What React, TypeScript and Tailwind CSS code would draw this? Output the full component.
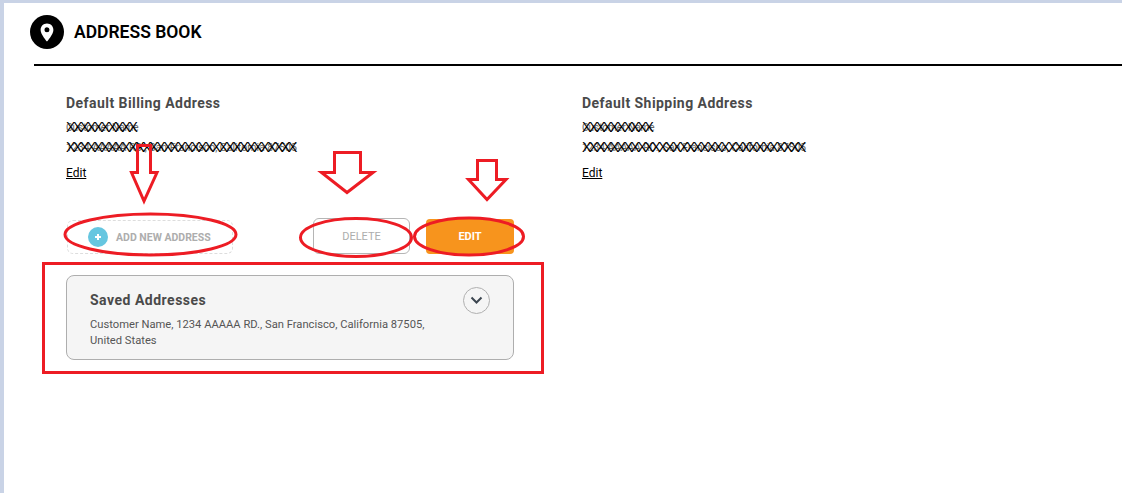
import React from 'react';

const font = { fontFamily: 'Roboto, sans-serif' };

const MaskedLine: React.FC<{ real: string; xs: string; realSize: string }> = ({ real, xs, realSize }) => (
  <div className="relative h-5">
    <span className={`absolute left-0 top-[3px] whitespace-nowrap leading-4 text-[#666] ${realSize}`}>{real}</span>
    <span className="absolute left-0 top-0 whitespace-nowrap font-['Liberation_Sans'] text-[14px] leading-5 tracking-[-2.400px] text-black">
      {xs}
    </span>
  </div>
);

const AddressColumn: React.FC<{ title: string; x2: string; size2: string }> = ({ title, x2, size2 }) => (
  <div>
    <h3 className="text-[14px] font-bold leading-5 tracking-[0.45px] text-[#4a4a4a]">{title}</h3>
    <div className="mt-[4px]">
      <MaskedLine real="Customer Name" xs="XXXXXXXXXX" realSize="text-[10px]" />
      <MaskedLine real="1234 AAAAA RD., San Francisco, California 87505" xs={x2} realSize={size2} />
    </div>
    <a className="mt-[9px] block w-fit text-[12px] leading-[14px] text-black underline">Edit</a>
  </div>
);

const Annotations: React.FC = () => (
  <svg className="pointer-events-none absolute left-0 top-0" width="1122" height="493" fill="none" stroke="#ed1c24">
    <path strokeWidth="3" d="M137.500 145.500H150.500V172.500H157L144 201L131.500 172.500H137.500Z" />
    <path strokeWidth="3" d="M334.500 152.500H360.500V172.500H373L347 192.500L321.500 172.500H334.500Z" />
    <path strokeWidth="3" d="M477.500 160.500H496.500V179.500H506L487 199.500L468.500 179.500H477.500Z" />
    <ellipse cx="150.500" cy="234.500" rx="85.500" ry="20.500" strokeWidth="3" />
    <ellipse cx="356" cy="237.500" rx="55.500" ry="19" strokeWidth="3" />
    <ellipse cx="469" cy="236.500" rx="54.500" ry="18.500" strokeWidth="3" />
    <rect x="43.500" y="263.500" width="499" height="109" strokeWidth="3" />
  </svg>
);

const App: React.FC = () => {
  return (
    <div className="relative h-[493px] w-[1122px] overflow-hidden bg-[#c9d3e6]" style={font}>
      <div className="ml-[4px] h-[490px] translate-y-[3px] bg-white">
        <header className="ml-[26px] flex h-[61px] items-center gap-[10px] pb-[3px]">
          <span className="flex h-[34px] w-[34px] items-center justify-center rounded-full bg-black">
            <svg width="14" height="19" viewBox="0 0 14 19">
              <path
                fillRule="evenodd"
                fill="#fff"
                d="M7 0.500C3.300 0.500 0.600 3.300 0.600 6.900C0.600 11.200 7 18.500 7 18.500C7 18.500 13.400 11.200 13.400 6.900C13.400 3.300 10.700 0.500 7 0.500ZM7 9.300A2.500 2.500 0 1 1 7 4.300A2.500 2.500 0 0 1 7 9.300Z"
              />
            </svg>
          </span>
          <h1 className="text-[17.500px] font-semibold uppercase leading-6 text-black">Address Book</h1>
        </header>
        <div className="ml-[30px] h-[2px] bg-black" />

        <div className="ml-[62px] mt-[27px] flex">
          <div className="w-[516px]">
            <AddressColumn title="Default Billing Address" x2="XXXXXXXXXXXXXXXXXXXXXXXXXXXXXXXXX" size2="text-[10.500px]" />

            <div className="mt-[38px] flex w-[448px] items-center">
              <button className="ml-[1px] mt-[2px] flex h-[34px] w-[166px] items-center gap-[8px] rounded-[6px] border border-dashed border-[#ddd] pl-[20px]">
                <span className="flex h-5 w-5 items-center justify-center rounded-full bg-[#66c6e0]">
                  <svg width="8" height="8" viewBox="0 0 8 8" stroke="#fff" strokeWidth="2">
                    <path d="M4 1V7M1 4H7" />
                  </svg>
                </span>
                <span className="pt-[1px] text-[10.500px] font-bold uppercase text-[#adadad]">Add new address</span>
              </button>
              <button className="ml-[80px] h-[36px] w-[97px] rounded-[6px] border border-[#b5b5b5] pt-[2px] text-[11px] uppercase text-[#adadad]">
                Delete
              </button>
              <button className="ml-[16px] h-[35px] w-[88px] rounded-[4px] bg-[#f7941d] pt-[2px] text-[11px] font-bold uppercase text-white">
                Edit
              </button>
            </div>

            <section className="relative mt-[21px] h-[85px] w-[448px] rounded-[8px] border border-[#aeaeae] bg-[#f5f5f5] pl-[23px] pt-[14px]">
              <h3 className="text-[14px] font-bold leading-5 tracking-[0.5px] text-[#4a4a4a]">Saved Addresses</h3>
              <p className="mt-[7px] w-[345px] text-[11.200px] leading-4 text-[#555]">
                Customer Name, 1234 AAAAA RD., San Francisco, California 87505, United States
              </p>
              <span className="absolute right-[23px] top-[11px] flex h-[27px] w-[27px] items-center justify-center rounded-full border border-[#b0b0b0]">
                <svg width="13" height="9" viewBox="0 0 13 9" fill="none" stroke="#3c4650" strokeWidth="2">
                  <path d="M1.500 1.500L6.500 6.500L11.500 1.500" />
                </svg>
              </span>
            </section>
          </div>

          <AddressColumn title="Default Shipping Address" x2="XXXXXXXXXXXXXXXXXXXXXXXXXXXXXXXX" size2="text-[10.200px]" />
        </div>
      </div>
      <Annotations />
    </div>
  );
};

export default App;
